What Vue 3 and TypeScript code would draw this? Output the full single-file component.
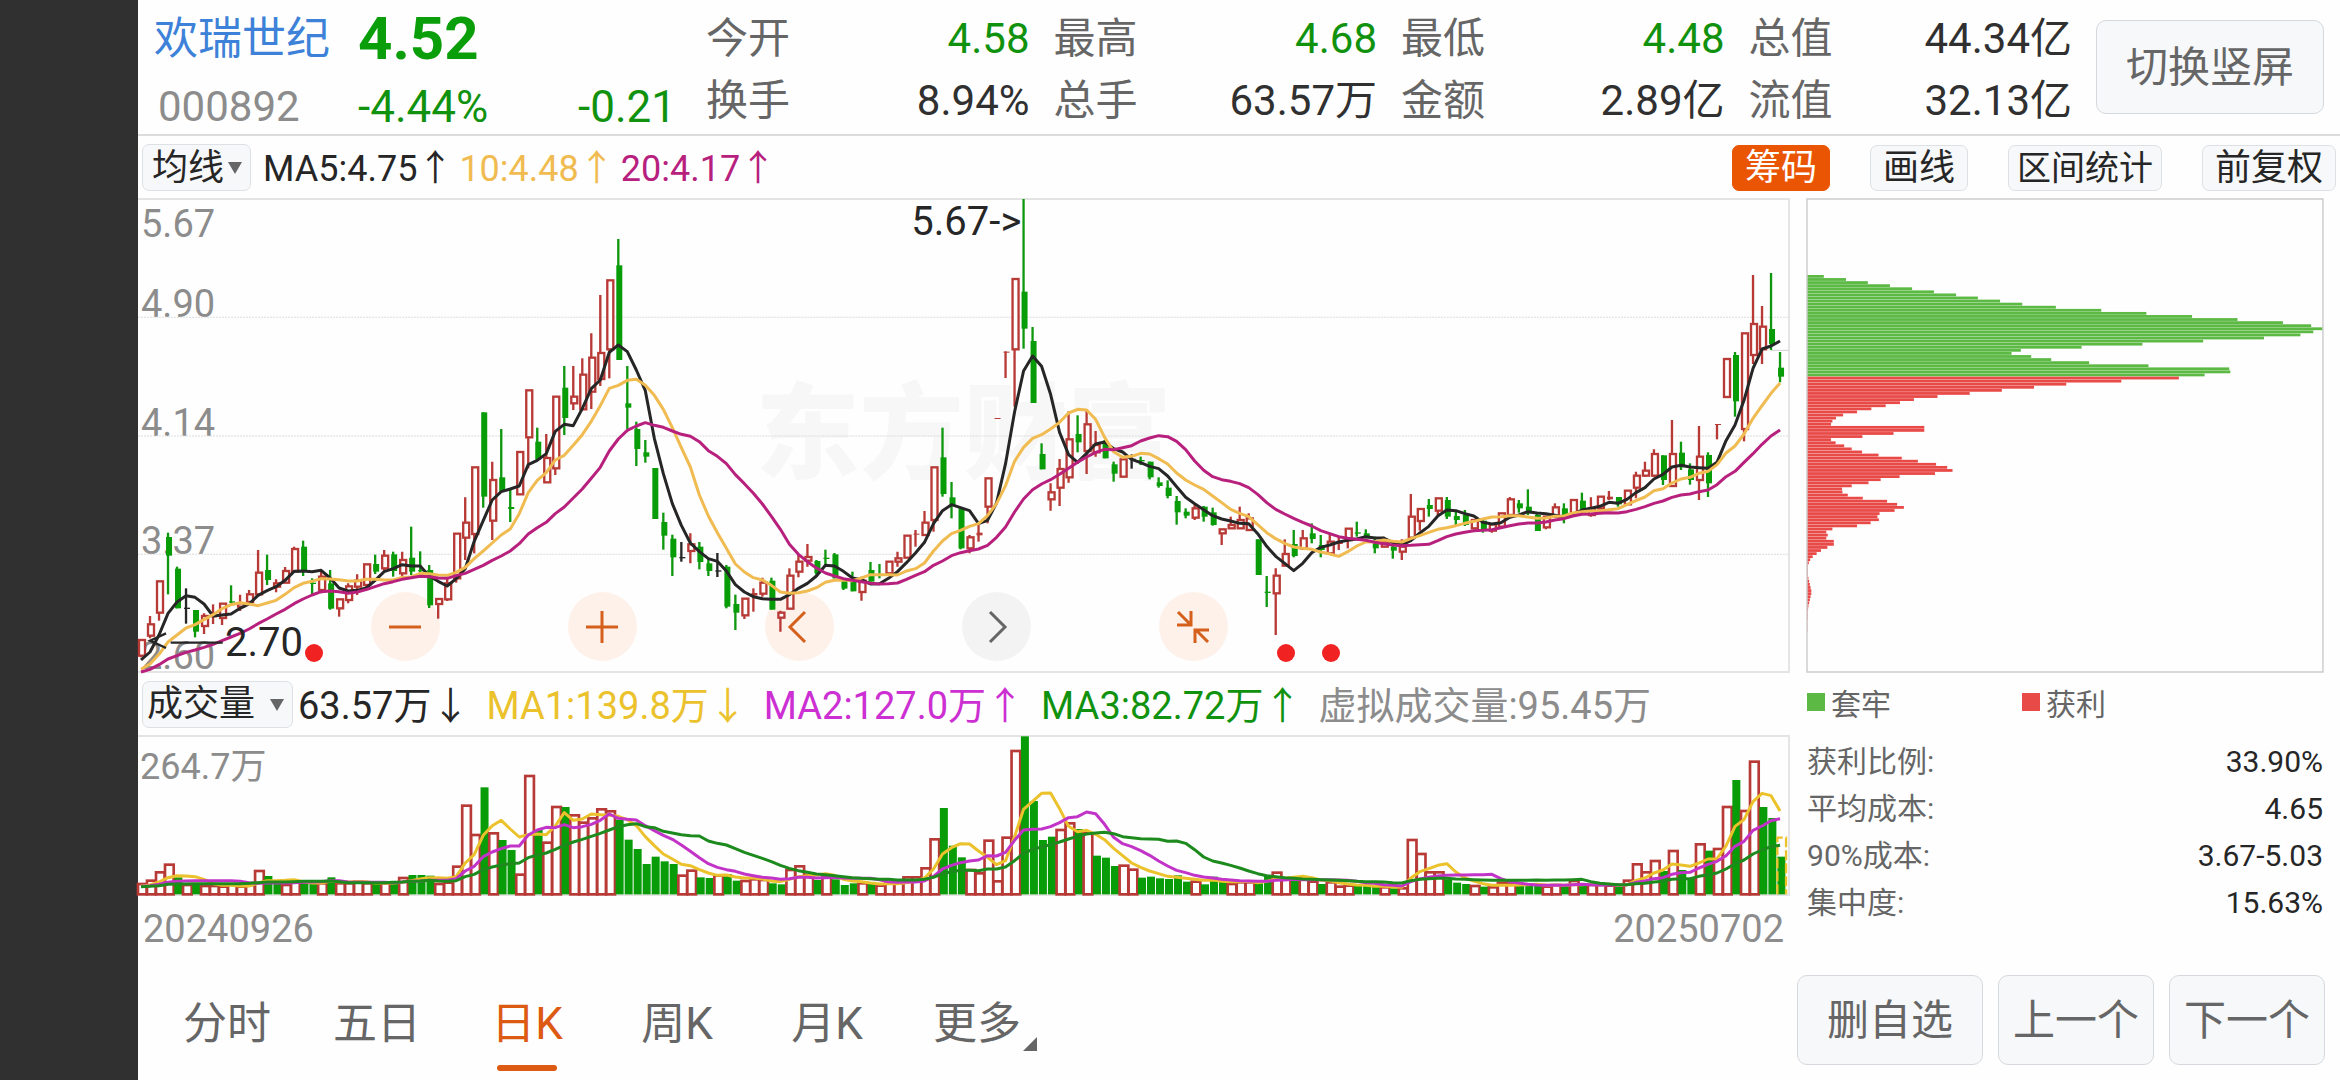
<script setup lang="ts">
import { ref } from 'vue'

type Tone = 'rise' | 'fall' | 'flat'

interface Candle {
  x: number
  tone: Tone
  high: number
  top: number
  bottom: number
  low: number
}

interface VolumeBar {
  x: number
  tone: Tone
  top: number
}

// Plot units: three to a pixel, the y axis runs downwards.
const STEP = 27
const FIRST = 12
const VOLUME_BASE = 673
const CHIP_START = 255
const CHIP_STEP = 9.24
const CHIP_SPLIT = 33

const tones: Record<string, Tone> = { r: 'rise', g: 'fall', k: 'flat' }

// tone, high, body top, body bottom, low
const candleData = `
r 1350 1350 1397 1402|r 1278 1303 1337 1345|r 1174 1174 1268 1292|g 1028 1041 1097 1213|g 1130 1136 1255 1255
k 1195 1253 1257 1301|g 1260 1260 1325 1342|r 1270 1278 1308 1332|r 1243 1276 1282 1302|r 1241 1241 1284 1305
g 1186 1234 1238 1240|r 1214 1240 1250 1263|r 1200 1213 1236 1240|r 1080 1148 1213 1215|g 1094 1140 1170 1185
r 1168 1180 1190 1207|r 1131 1143 1178 1178|r 1070 1077 1145 1145|g 1052 1070 1145 1158|g 1165 1178 1182 1212
r 1145 1160 1200 1210|g 1140 1180 1256 1259|r 1228 1228 1255 1280|r 1180 1189 1230 1240|r 1153 1172 1190 1215
r 1123 1123 1185 1190|g 1094 1122 1145 1152|r 1080 1097 1135 1145|g 1085 1093 1143 1160|r 1085 1110 1150 1160
g 1010 1103 1145 1155|g 1084 1140 1144 1160|g 1125 1140 1246 1254|r 1227 1227 1242 1286|r 1165 1180 1228 1233
r 1031 1031 1165 1178|r 922 998 1043 1110|r 832 832 1032 1090|g 667 667 920 953|r 815 870 992 1050
g 717 862 905 905|g 900 951 957 996|r 786 786 913 913|r 601 601 742 835|g 713 755 808 808
r 732 804 877 877|r 620 620 835 855|g 528 593 684 735|r 528 620 640 660|r 505 554 658 658
r 430 503 605 657|r 315 489 567 588|r 271 271 478 565|g 147 226 510 510|g 528 640 653 717
g 695 717 777 828|g 750 787 800 818|g 834 834 987 987|g 968 996 1037 1079|g 1034 1046 1102 1158
k 1056 1101 1105 1115|r 1030 1063 1083 1120|g 1056 1070 1116 1138|g 1105 1120 1143 1158|k 1089 1141 1145 1161
g 1125 1130 1250 1255|g 1214 1242 1268 1320|r 1226 1226 1276 1287|r 1195 1209 1217 1265|r 1163 1178 1211 1220
g 1163 1172 1259 1259|r 1262 1268 1283 1325|r 1135 1157 1256 1256|r 1095 1115 1145 1162|r 1062 1101 1112 1130
g 1110 1113 1150 1155|g 1079 1103 1107 1128|g 1089 1093 1165 1165|g 1170 1172 1196 1200|g 1145 1170 1204 1204
r 1160 1172 1206 1232|g 1116 1140 1175 1175|g 1122 1153 1157 1165|r 1115 1115 1150 1155|r 1085 1105 1115 1130
r 1037 1037 1103 1103|r 1020 1031 1034 1070|r 963 998 1035 1035|r 832 832 990 1025|g 713 802 912 920
g 876 922 947 985|g 955 955 1075 1078|r 1035 1042 1075 1090|r 995 1028 1036 1055|r 865 865 950 1000
r 684 684 687 687|r 484 485 488 564|r 267 267 478 650|g 27 305 416 476|g 411 453 639 639
g 760 792 838 838|r 880 907 928 962|r 807 837 893 948|r 664 748 862 878|g 676 732 757 787
r 660 703 783 852|r 723 765 787 800|g 750 760 805 805|g 815 823 851 875|r 808 808 860 862
k 793 806 810 836|g 800 810 814 825|g 815 815 862 868|g 862 877 888 893|g 871 893 918 925
g 918 933 967 1004|g 955 965 977 985|r 945 955 983 990|g 948 950 980 995|g 953 967 1005 1007
r 1018 1018 1030 1065|r 980 1005 1015 1015|r 950 990 1015 1015|r 970 985 1020 1020|g 1048 1048 1155 1155
g 1158 1205 1209 1251|r 1135 1157 1210 1335|r 1048 1092 1127 1127|g 1020 1062 1098 1102|r 1020 1045 1075 1080
g 1000 1030 1047 1060|g 1035 1065 1080 1102|r 1030 1055 1090 1095|r 1040 1055 1062 1080|r 1016 1016 1050 1075
g 995 1027 1031 1040|g 1018 1030 1045 1045|g 1040 1060 1075 1090|r 1040 1055 1070 1072|g 1060 1070 1082 1106
r 1048 1070 1085 1110|r 912 980 1043 1043|r 957 957 993 1022|g 927 945 957 980|r 925 925 962 975
g 921 930 980 987|g 965 978 990 1005|g 960 975 1005 1008|r 990 990 1015 1018|g 990 992 1020 1028
r 1000 1003 1022 1028|r 970 970 1010 1012|r 921 928 975 975|g 930 940 955 968|g 898 950 970 975
g 970 975 1023 1023|r 980 980 1012 1018|r 940 952 980 980|g 940 955 980 1000|r 930 930 970 972
g 908 932 960 962|r 922 955 975 980|r 920 920 955 958|r 903 920 928 930|g 921 921 943 950
r 902 902 943 945|r 845 857 893 925|r 815 842 857 860|r 778 792 857 860|g 796 796 870 885
r 690 792 888 890|g 755 788 832 840|g 820 838 870 884|r 708 800 870 930|g 787 795 880 921
r 702 702 705 748|r 507 507 621 621|g 486 495 634 680|r 430 430 717 754|r 255 402 495 522
r 348 410 478 522|g 249 417 462 480|g 486 533 560 577`

const volumeData = `
r642 r632 r607 r584 g622 r645 g640 r648 r648 r650 r645 r650 r645 r603 g618 g642 r645 r635 g635 g638
r640 g622 r640 r640 r635 r640 g640 r640 g642 r624 g615 g615 g617 r642 r638 r590 r407 r495 g352 r490
g510 g540 r614 r318 g480 r518 r411 g411 r436 r458 r445 r418 r424 g449 g509 g537 g582 g560 g574 g582
r617 r602 g622 g624 r617 g612 g632 r633 r628 r630 g640 g643 r600 r589 r615 g630 r620 g628 g645 g640
r640 g640 r647 r640 r640 r622 r622 r595 r508 g414 g527 g562 r600 r610 r512 r634 r503 r243 g199 g393
g510 g500 r480 r460 g477 r490 g557 g563 g588 r587 r599 g623 g620 g625 g627 g616 g635 r635 g643 g620
g635 r642 r637 r637 g640 g615 r608 r627 g620 r627 r635 g642 r637 r650 r647 g648 g648 g650 r652 g655
r655 r510 r552 r607 r607 g628 g638 g642 r648 g650 r652 r638 r640 g645 g645 g647 r650 r645 g645 r633
g645 r645 r645 r647 g650 r632 r583 r607 r573 g603 r543 g600 g627 r523 g542 r537 r411 g330 r423 r275
g411 g444 g560`

const chipWidths = [
  47, 109, 170, 232, 294, 355, 417, 478, 540, 602, 696, 823, 949, 1077, 1204, 1331, 1410, 1442, 1416,
  1380, 1278, 1108, 938, 768, 598, 572, 627, 683, 789, 955, 1181, 1184, 1112, 1040, 879, 725, 635, 545,
  455, 365, 299, 260, 220, 180, 140, 101, 81, 71, 67, 328, 328, 242, 155, 67, 80, 104, 125, 154, 200,
  265, 310, 361, 392, 407, 358, 259, 206, 172, 125, 98, 99, 114, 156, 224, 252, 271, 245, 203, 197, 201,
  178, 140, 71, 54, 58, 54, 75, 75, 57, 39, 27, 16, 9, 5, 2, 2, 2, 2, 4, 6, 8, 10, 12, 12, 10, 8, 6, 4,
  3, 2, 2, 2, 1, 1, 1, 1,
]

const candles: Candle[] = candleData
  .trim()
  .split(/[|\n]/)
  .map((entry, i) => {
    const [tone, high, top, bottom, low] = entry.trim().split(' ')
    return { x: FIRST + STEP * i, tone: tones[tone], high: +high, top: +top, bottom: +bottom, low: +low }
  })

const volumes: VolumeBar[] = volumeData
  .trim()
  .split(/\s+/)
  .map((entry, i) => ({ x: FIRST + STEP * i, tone: tones[entry[0]], top: +entry.slice(1) }))

function movingAverage(history: number[], values: number[], span: number): string {
  const all = [...history, ...values]
  return values
    .map((_, i) => {
      const end = history.length + i + 1
      const sum = all.slice(end - span, end).reduce((a, b) => a + b, 0)
      return `${FIRST - 3 + STEP * i},${Math.round(sum / span)}`
    })
    .join(' ')
}

const closes = candles.map((c) => (c.tone === 'rise' ? c.top : c.bottom))
const closeHistory = [...Array(10).fill(1454), ...Array(5).fill(1466), ...Array(4).fill(1425)]
const volumeTops = volumes.map((v) => v.top)
const volumeHistory = Array(19).fill(650)

const priceLines = [
  { color: '#262626', points: movingAverage(closeHistory, closes, 5) },
  { color: '#f0bb50', points: movingAverage(closeHistory, closes, 10) },
  { color: '#b8207e', points: movingAverage(closeHistory, closes, 20) },
]
const volumeLines = [
  { color: '#ebc22c', points: movingAverage(volumeHistory, volumeTops, 5) },
  { color: '#c233c8', points: movingAverage(volumeHistory, volumeTops, 10) },
  { color: '#1c8a1c', points: movingAverage(volumeHistory, volumeTops, 20) },
]

const quotes = [
  { label: '今开', value: '4.58', fall: true },
  { label: '最高', value: '4.68', fall: true },
  { label: '最低', value: '4.48', fall: true },
  { label: '总值', value: '44.34亿', fall: false },
  { label: '换手', value: '8.94%', fall: false },
  { label: '总手', value: '63.57万', fall: false },
  { label: '金额', value: '2.89亿', fall: false },
  { label: '流值', value: '32.13亿', fall: false },
]

const priceAverages = [
  { text: 'MA5:4.75↑', color: '#262626' },
  { text: '10:4.48↑', color: '#f0bb50' },
  { text: '20:4.17↑', color: '#b8207e' },
]
const volumeAverages = [
  { text: '63.57万↓', color: '#262626' },
  { text: 'MA1:139.8万↓', color: '#ebc22c' },
  { text: 'MA2:127.0万↑', color: '#cc2fd2' },
  { text: 'MA3:82.72万↑', color: '#11920f' },
  { text: '虚拟成交量:95.45万', color: '#8c8c8c' },
]

const chipStats = [
  { label: '获利比例:', value: '33.90%' },
  { label: '平均成本:', value: '4.65' },
  { label: '90%成本:', value: '3.67-5.03' },
  { label: '集中度:', value: '15.63%' },
]

const tabs = ['分时', '五日', '日K', '周K', '月K', '更多']
const activeTab = ref('日K')
const showChips = ref(true)
</script>

<template>
  <div class="screen">
    <div class="gutter"></div>
    <main class="board">
      <header class="quote">
        <div class="identity">
          <h1 class="name">欢瑞世纪</h1>
          <strong class="price">4.52</strong>
          <span class="code">000892</span>
          <span class="change"><span>-4.44%</span><span>-0.21</span></span>
        </div>
        <dl class="figures">
          <div v-for="q in quotes" :key="q.label" class="figure">
            <dt>{{ q.label }}</dt>
            <dd :class="{ fall: q.fall }">{{ q.value }}</dd>
          </div>
        </dl>
        <button class="box-button switch" type="button">切换竖屏</button>
      </header>

      <div class="toolbar">
        <label class="picker picker-ma">
          <select aria-label="主图指标"><option>均线</option></select>
          <svg class="caret" viewBox="0 0 14 12" aria-hidden="true"><path d="M0 0H14L7 12Z" /></svg>
        </label>
        <div class="readings">
          <span v-for="m in priceAverages" :key="m.text" :style="{ color: m.color }">{{ m.text }}</span>
        </div>
        <div class="tools">
          <button type="button" class="tool" :class="{ on: showChips }" @click="showChips = !showChips">筹码</button>
          <button type="button" class="tool">画线</button>
          <button type="button" class="tool compact">区间统计</button>
          <button type="button" class="tool">前复权</button>
        </div>
      </div>

      <div class="content">
        <section class="charts">
          <div class="plot price-plot">
            <div class="watermark">东方财富</div>
            <span class="axis axis-top">5.67</span>
            <span class="axis axis-1">4.90</span>
            <span class="axis axis-2">4.14</span>
            <span class="axis axis-3">3.37</span>
            <span class="axis axis-4">2.60</span>
            <div class="controls">
              <button type="button" class="round" aria-label="缩小">
                <svg viewBox="0 0 34 34"><path d="M1 17H33" /></svg>
              </button>
              <button type="button" class="round" aria-label="放大">
                <svg viewBox="0 0 34 34"><path d="M1 17H33M17 1V33" /></svg>
              </button>
              <button type="button" class="round" aria-label="左移">
                <svg viewBox="0 0 34 34"><path d="M23 2L8 17L23 32" /></svg>
              </button>
              <button type="button" class="round muted" aria-label="右移">
                <svg viewBox="0 0 34 34"><path d="M11 2L26 17L11 32" /></svg>
              </button>
              <button type="button" class="round" aria-label="收起">
                <svg viewBox="0 0 34 34"><path d="M2 2L14 14M1 15H15V1M32 32L20 20M33 20H19V33" /></svg>
              </button>
            </div>
            <svg class="canvas" viewBox="0 27 4950 1419" preserveAspectRatio="none" aria-hidden="true">
              <g class="grid">
                <path d="M0 382H4950M0 738H4950M0 1093H4950" />
              </g>
              <path class="frame" d="M0 27H4950V1446H0" />
              <path class="last-close" d="M4896 481H4950" />
              <g v-for="c in candles" :key="c.x" :class="c.tone">
                <template v-if="c.tone === 'rise' && c.bottom - c.top > 8">
                  <path class="wick" :d="`M${c.x - 3} ${c.high}V${c.top}M${c.x - 3} ${c.bottom}V${c.low}`" />
                  <rect class="body" :x="c.x - 9" :y="c.top" width="18" :height="c.bottom - c.top" />
                </template>
                <template v-else>
                  <path class="wick" :d="`M${c.x - 3} ${c.high}V${c.low}`" />
                  <rect class="solid" :x="c.x - 9" :y="c.top" width="18" :height="c.bottom - c.top" />
                </template>
              </g>
              <polyline v-for="l in priceLines" :key="l.color" class="average" :points="l.points" :stroke="l.color" />
              <path class="pointer" d="M84 1330L36 1352L84 1374M98 1358H254" />
            </svg>
            <span class="mark mark-high">5.67-&gt;</span>
            <span class="mark mark-low">2.70</span>
            <i class="event event-1"></i>
            <i class="event event-2"></i>
            <i class="event event-3"></i>
          </div>

          <div class="volume-bar">
            <label class="picker picker-volume">
              <select aria-label="副图指标"><option>成交量</option></select>
              <svg class="caret" viewBox="0 0 14 12" aria-hidden="true"><path d="M0 0H14L7 12Z" /></svg>
            </label>
            <div class="readings volume-readings">
              <span v-for="m in volumeAverages" :key="m.text" :style="{ color: m.color }">{{ m.text }}</span>
            </div>
          </div>

          <div class="plot volume-plot">
            <span class="axis axis-volume">264.7万</span>
            <svg class="canvas" viewBox="0 198 4950 477" preserveAspectRatio="none" aria-hidden="true">
              <path class="frame" d="M0 198H4950V675H0" />
              <template v-for="v in volumes" :key="v.x">
                <rect v-if="v.tone === 'rise'" class="hollow" :x="v.x - 12" :y="v.top" width="26" :height="VOLUME_BASE - v.top" />
                <rect v-else class="filled" :x="v.x - 11" :y="v.top" width="24" :height="VOLUME_BASE - v.top" />
              </template>
              <path class="virtual" d="M4915 673V503H4941V673" />
              <polyline v-for="l in volumeLines" :key="l.color" class="average" :points="l.points" :stroke="l.color" />
            </svg>
          </div>

          <div class="dates"><span>20240926</span><span>20250702</span></div>
        </section>

        <section class="chips">
          <div class="plot price-plot">
            <svg class="canvas" viewBox="0 27 1443 1419" preserveAspectRatio="none" aria-hidden="true">
              <g v-if="showChips">
                <rect
                  v-for="(w, i) in chipWidths"
                  :key="i"
                  :class="i < CHIP_SPLIT ? 'trapped' : 'profit'"
                  x="0"
                  :y="CHIP_START + CHIP_STEP * i"
                  :width="w"
                  height="8.4"
                />
              </g>
              <path class="chip-frame" d="M0 27H1443V1446H0Z" />
            </svg>
          </div>
          <div class="legend">
            <span class="key"><i class="swatch trapped-swatch"></i>套牢</span>
            <span class="key"><i class="swatch profit-swatch"></i>获利</span>
          </div>
          <dl class="stats">
            <div v-for="s in chipStats" :key="s.label" class="stat">
              <dt>{{ s.label }}</dt>
              <dd>{{ s.value }}</dd>
            </div>
          </dl>
        </section>
      </div>

      <footer class="footer">
        <nav class="tabs">
          <button
            v-for="t in tabs"
            :key="t"
            type="button"
            class="tab"
            :class="{ active: t === activeTab }"
            @click="activeTab = t"
          >
            {{ t }}
            <svg v-if="t === '更多'" class="corner" viewBox="0 0 12 12" aria-hidden="true"><path d="M12 0V12H0Z" /></svg>
          </button>
        </nav>
        <div class="actions">
          <button type="button" class="box-button wide">删自选</button>
          <button type="button" class="box-button">上一个</button>
          <button type="button" class="box-button">下一个</button>
        </div>
      </footer>
    </main>
  </div>
</template>

<style>
body {
  margin: 0;
  background: #fefefe;
}
</style>

<style scoped>
.screen {
  display: flex;
  min-height: 100vh;
  font-family: Roboto, 'Noto Sans CJK SC', sans-serif;
  color: #262626;
  background: #fefefe;
}

.screen * {
  box-sizing: border-box;
}

button,
select {
  margin: 0;
  padding: 0;
  font: inherit;
  color: inherit;
  border: 0;
  background: none;
  cursor: pointer;
}

dl,
dd,
h1 {
  margin: 0;
}

.gutter {
  flex: 0 0 138px;
  background: #303030;
}

.board {
  display: flex;
  flex: 1;
  flex-direction: column;
  min-width: 0;
}

/* Quote header */
.quote {
  display: flex;
  align-items: center;
  height: 136px;
  padding: 0 16px;
  border-bottom: 2px solid #dcdcdc;
}

.identity {
  display: grid;
  grid-template-columns: 204px 318px;
  align-items: center;
  row-gap: 4px;
  padding-top: 12px;
  margin-right: 30px;
  line-height: 64px;
}

.name {
  font-size: 44px;
  font-weight: 400;
  color: #3d82d8;
}

.price {
  font-size: 60px;
  font-weight: 700;
  color: #0a9e0a;
}

.code {
  padding-left: 4px;
  font-size: 42px;
  color: #8c8c8c;
}

.change {
  display: flex;
  justify-content: space-between;
  font-size: 44px;
  color: #11920f;
}

.figures {
  display: grid;
  flex: 1;
  grid-template-columns: repeat(4, 1fr);
  column-gap: 24px;
  padding-top: 6px;
  font-size: 42px;
  line-height: 62px;
}

.figure {
  display: flex;
  justify-content: space-between;
}

.figure dt {
  color: #666;
}

.figure dd {
  color: #303030;
}

.figure dd.fall {
  color: #11920f;
}

.box-button {
  min-width: 156px;
  height: 90px;
  padding: 2px 12px 0;
  font-size: 42px;
  line-height: 60px;
  color: #666;
  background: #f7f8fa;
  border: 1px solid #d5d9dd;
  border-radius: 10px;
}

.switch {
  width: 228px;
  height: 94px;
  margin-left: 24px;
}

.wide {
  width: 186px;
}

/* Indicator rows */
.toolbar,
.volume-bar {
  display: flex;
  align-items: center;
  height: 63px;
  padding: 0 4px;
}

.volume-bar {
  height: 64px;
}

.picker {
  position: relative;
  display: flex;
  height: 47px;
  background: #f7f8fa;
  border: 1px solid #dde1e5;
  border-radius: 7px;
}

.picker select {
  width: 100%;
  padding-left: 9px;
  font-size: 36px;
  appearance: none;
}

.picker-ma {
  width: 109px;
}

.picker-volume {
  width: 151px;
}

.picker-volume select {
  padding-left: 4px;
}

.caret {
  position: absolute;
  top: 17px;
  right: 8px;
  width: 14px;
  height: 12px;
  fill: #666;
  pointer-events: none;
}

.readings {
  display: flex;
  gap: 6px;
  padding-bottom: 6px;
  margin-left: 12px;
  font-size: 36px;
  white-space: nowrap;
}

.volume-readings {
  gap: 17px;
  padding-bottom: 4px;
  margin-left: 5px;
  font-size: 38px;
}

.tools {
  display: flex;
  gap: 40px;
  margin-left: auto;
}

.tool {
  height: 46px;
  padding: 0 12px;
  font-size: 36px;
  line-height: 44px;
  background: #f7f8fa;
  border: 1px solid #dde1e5;
  border-radius: 7px;
}

.tool.on {
  color: #fff;
  background: #ea5504;
  border-color: #ea5504;
}

.tool.compact {
  padding: 0 8px;
  font-size: 34px;
}

/* Plots */
.content {
  display: grid;
  grid-template-columns: minmax(0, 3200fr) minmax(0, 1000fr);
  column-gap: 18px;
  padding-right: 17px;
}

.plot {
  position: relative;
}

.price-plot {
  height: 473px;
}

.volume-plot {
  height: 159px;
}

.canvas {
  position: absolute;
  inset: 0;
  width: 100%;
  height: 100%;
  overflow: visible;
  pointer-events: none;
}

.canvas path,
.canvas polyline {
  fill: none;
}

.canvas .frame {
  stroke: #e4e4e4;
  stroke-width: 6;
}

.grid {
  stroke: #dcdcdc;
  stroke-width: 3;
  stroke-dasharray: 6 3;
}

.last-close {
  stroke: #d0d0d0;
  stroke-width: 3;
}

.wick {
  stroke-width: 7;
}

.rise {
  stroke: #b83a36;
  fill: #b83a36;
}

.rise .body {
  fill: #fff;
  stroke-width: 7;
}

.fall {
  stroke: #0f980f;
  fill: #089c08;
}

.flat {
  stroke: #262626;
  fill: #262626;
}

.solid {
  stroke: none;
}

.average {
  stroke-width: 9;
  stroke-linejoin: round;
}

.pointer {
  stroke: #262626;
  stroke-width: 7;
}

.hollow {
  fill: #fff;
  stroke: #b83a36;
  stroke-width: 8;
}

.filled {
  fill: #089c08;
}

.virtual {
  stroke: #ebc22c;
  stroke-width: 7;
  stroke-dasharray: 30 9;
}

.chip-frame {
  stroke: #ccc;
  stroke-width: 4;
}

.trapped {
  fill: #5bb944;
}

.profit {
  fill: #e84a48;
}

.axis {
  position: absolute;
  left: 3px;
  font-size: 38px;
  line-height: 38px;
  color: #8c8c8c;
}

.axis-top {
  top: 6px;
}

.axis-1 {
  bottom: calc(75% - 6px);
}

.axis-2 {
  bottom: calc(50% - 6px);
}

.axis-3 {
  bottom: calc(25% - 6px);
}

.axis-4 {
  bottom: -3px;
}

.axis-volume {
  top: 12px;
  left: 2px;
  font-size: 36px;
}

.watermark {
  position: absolute;
  top: 50%;
  left: 37.4%;
  font-size: 104px;
  font-weight: 900;
  line-height: 128px;
  color: #f7f7f7;
  white-space: nowrap;
  transform: translateY(-50%);
}

.mark {
  position: absolute;
  font-size: 40px;
  line-height: 40px;
}

.mark-high {
  top: 3px;
  right: 46.5%;
}

.mark-low {
  bottom: 9px;
  left: 87px;
}

.event {
  position: absolute;
  bottom: 10px;
  width: 18px;
  height: 18px;
  background: #f02222;
  border-radius: 50%;
}

.event-1 {
  left: 10.1%;
}

.event-2 {
  left: 69%;
}

.event-3 {
  left: 71.7%;
}

.controls {
  position: absolute;
  bottom: 11px;
  left: 14.1%;
  display: flex;
  gap: 128px;
}

.round {
  display: flex;
  align-items: center;
  justify-content: center;
  width: 69px;
  height: 69px;
  background: #fef1ea;
  border-radius: 50%;
}

.round svg {
  width: 34px;
  height: 34px;
  fill: none;
  stroke: #d4601c;
  stroke-width: 3;
}

.round.muted {
  background: #f3f3f3;
}

.round.muted svg {
  stroke: #666;
}

.dates {
  display: flex;
  justify-content: space-between;
  padding: 12px 5px 0;
  font-size: 38px;
  line-height: 44px;
  color: #8c8c8c;
}

/* Chip distribution */
.legend {
  display: grid;
  grid-template-columns: 215px auto;
  align-items: center;
  height: 60px;
  font-size: 30px;
  color: #666;
}

.key {
  display: flex;
  gap: 6px;
  align-items: center;
}

.swatch {
  width: 18px;
  height: 18px;
}

.trapped-swatch {
  background: #5bb944;
}

.profit-swatch {
  background: #e84a48;
}

.stats {
  padding-top: 6px;
  font-size: 30px;
  line-height: 47px;
}

.stat {
  display: flex;
  justify-content: space-between;
}

.stat dt {
  color: #666;
}

/* Bottom bar */
.footer {
  display: flex;
  align-items: center;
  justify-content: space-between;
  height: 120px;
  padding: 0 15px 0 14px;
  margin-top: auto;
}

.tabs {
  display: flex;
}

.tab {
  position: relative;
  width: 150px;
  height: 102px;
  font-size: 44px;
  color: #666;
}

.tab.active {
  color: #dd5a12;
}

.tab.active::after {
  position: absolute;
  bottom: 0;
  left: 45px;
  width: 60px;
  height: 6px;
  content: '';
  background: #dd5a12;
  border-radius: 3px;
}

.corner {
  position: absolute;
  right: 15px;
  bottom: 20px;
  width: 14px;
  height: 14px;
  fill: #666;
}

.actions {
  display: flex;
  gap: 15px;
}
</style>
